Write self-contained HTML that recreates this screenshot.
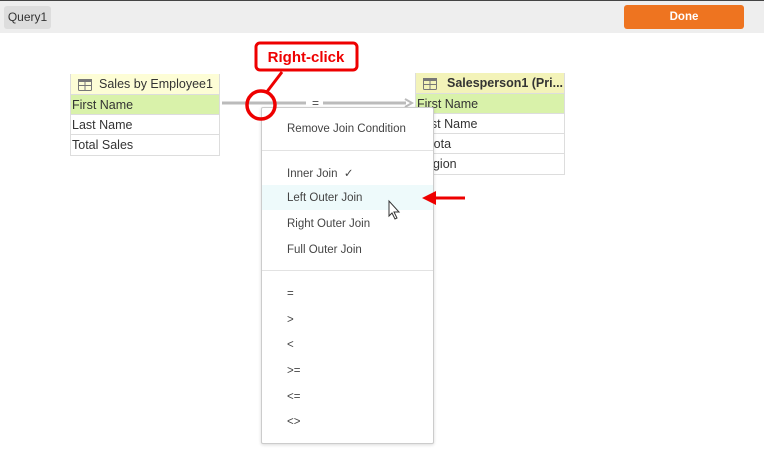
<!DOCTYPE html><html><head><style>
body{margin:0;width:764px;height:461px;background:#fff;font-family:"Liberation Sans",sans-serif;position:relative;overflow:hidden;font-size:12px;color:#333}
.a{position:absolute}
.tb{border:1px solid #ddd;background:#fff}
.r{position:absolute;left:0;right:0;height:20px;line-height:20px;border-top:1px solid #ddd;padding-left:1px;font-size:12.5px}
.mi{position:absolute;left:25px;font-size:11.5px;color:#444}
</style></head><body>
<div class="a" style="left:0;top:0;width:764px;height:1px;background:#444"></div>
<div class="a" style="left:0;top:1px;width:764px;height:32px;background:#eee"></div>
<div class="a" style="left:4px;top:6px;width:47px;height:23px;background:#ddd;border-radius:3px;line-height:23px;text-align:center;font-size:12px">Query1</div>
<div class="a" style="left:624px;top:5px;width:120px;height:24px;background:#ee7420;border-radius:3px;color:#fff;font-weight:bold;line-height:24px;text-align:center;font-size:11.5px">Done</div>

<div class="a tb" style="left:70px;top:74px;width:148px;height:80px">
<div class="r" style="top:-1px;border:none;background:#fdfdd6;padding-left:28px;height:20px">Sales by Employee1</div>
<svg class="a" style="left:7px;top:4px" width="14" height="12"><rect x=".5" y=".5" width="13" height="11" rx="1" fill="none" stroke="#777"/><line x1="0" y1="6.5" x2="14" y2="6.5" stroke="#777"/><line x1="7" y1="0" x2="7" y2="12" stroke="#777"/><rect x="0" y="0" width="14" height="3" fill="#777"/></svg>
<div class="r" style="top:19px;background:#d9f2aa">First Name</div>
<div class="r" style="top:39px">Last Name</div>
<div class="r" style="top:59px">Total Sales</div>
</div>

<div class="a tb" style="left:415px;top:73px;width:148px;height:100px">
<div class="r" style="top:-1px;border:none;background:#f3f3b9;padding-left:31px;font-weight:bold">Salesperson1 (Pri...</div>
<svg class="a" style="left:7px;top:4px" width="14" height="12"><rect x=".5" y=".5" width="13" height="11" rx="1" fill="none" stroke="#777"/><line x1="0" y1="6.5" x2="14" y2="6.5" stroke="#777"/><line x1="7" y1="0" x2="7" y2="12" stroke="#777"/><rect x="0" y="0" width="14" height="3" fill="#777"/></svg>
<div class="r" style="top:19px;background:#d9f2aa">First Name</div>
<div class="r" style="top:39px">Last Name</div>
<div class="r" style="top:59px">Quota</div>
<div class="r" style="top:79px">Region</div>
</div>

<svg class="a" style="left:0;top:0" width="764" height="461">
<line x1="222" y1="103" x2="306" y2="103" stroke="#bbb" stroke-width="3"/>
<line x1="323" y1="103" x2="406" y2="103" stroke="#bbb" stroke-width="3"/>
<path d="M405 99 L412 103 L405 107" fill="none" stroke="#bbb" stroke-width="2"/>
<text x="312" y="107" font-size="12" fill="#444" font-family="Liberation Sans">=</text>
</svg>

<div class="a" style="left:261px;top:107px;width:171px;height:335px;background:#fff;border:1px solid #ccc;border-radius:2px;box-shadow:0 1px 3px rgba(0,0,0,.15)">
<div class="mi" style="top:15px">Remove Join Condition</div>
<div class="a" style="left:0;right:0;top:42px;height:1px;background:#e2e2e2"></div>
<div class="mi" style="top:58px">Inner Join &nbsp;✓</div>
<div class="a" style="left:0;right:0;top:77px;height:25px;background:#eefafb"></div>
<div class="mi" style="top:84px">Left Outer Join</div>
<div class="mi" style="top:110px">Right Outer Join</div>
<div class="mi" style="top:136px">Full Outer Join</div>
<div class="a" style="left:0;right:0;top:162px;height:1px;background:#e2e2e2"></div>
<div class="mi" style="top:180px">=</div>
<div class="mi" style="top:206px">&gt;</div>
<div class="mi" style="top:231px">&lt;</div>
<div class="mi" style="top:257px">&gt;=</div>
<div class="mi" style="top:283px">&lt;=</div>
<div class="mi" style="top:308px">&lt;&gt;</div>
</div>

<svg class="a" style="left:0;top:0" width="764" height="461">
<line x1="266" y1="93" x2="282" y2="72" stroke="#e00" stroke-width="3"/>
<circle cx="261" cy="105" r="14" fill="none" stroke="#e00" stroke-width="3.5"/>
<rect x="256" y="43" width="101" height="27" rx="4" fill="#fff" stroke="#e00" stroke-width="3"/>
<text x="306" y="62" text-anchor="middle" font-size="15" font-weight="bold" fill="#e00" font-family="Liberation Sans">Right-click</text>
<line x1="432" y1="198" x2="465" y2="198" stroke="#e00" stroke-width="3"/>
<path d="M422 198 L436 191 L436 205 Z" fill="#e00"/>
<path d="M389 201 L389 216 L392 213 L395 219 L397 218 L394 212 L399 212 Z" fill="#fff" stroke="#333" stroke-width="1"/>
</svg>
</body></html>
